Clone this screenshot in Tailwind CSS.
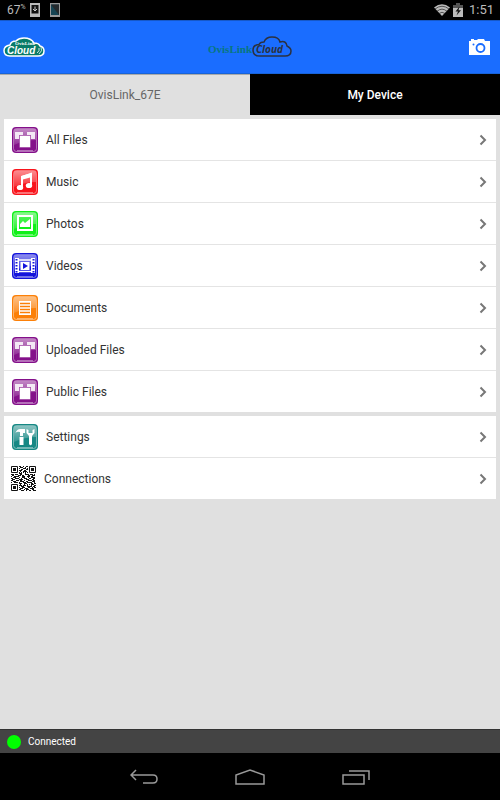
<!DOCTYPE html>
<html lang="en">

<head>
    <meta charset="UTF-8">
    <meta name="viewport" content="width=device-width, initial-scale=1.0">
    <title>OvisLink Cloud</title>
    <script src="https://cdn.jsdelivr.net/npm/@tailwindcss/browser@4"></script>
</head>

<body class="min-h-screen flex flex-col bg-[#e0e0e0] font-['Roboto',sans-serif] text-[#333]">
    <!-- shared icon parts -->
    <svg class="absolute w-0 h-0" aria-hidden="true">
        <defs>
            <linearGradient id="gloss" x1="0" y1="0" x2="0" y2="1">
                <stop offset="0" stop-color="#fff" stop-opacity=".5" />
                <stop offset="1" stop-color="#fff" stop-opacity=".12" />
            </linearGradient>
            <symbol id="tile" viewBox="0 0 26 26">
                <rect width="26" height="26" rx="4" fill="currentColor" />
                <path d="M2 4Q2 2 4 2H22Q24 2 24 4V13Q13 13 2 18Z" fill="url(#gloss)" />
                <rect x="1.5" y="1.5" width="23" height="23" rx="3" fill="none" stroke="#fff" stroke-opacity=".4" />
                <path d="M5 23.5H21" stroke="#fff" stroke-opacity=".4" />
            </symbol>
            <symbol id="files" viewBox="0 0 26 26">
                <use href="#tile" />
                <path d="M3 5H11V8H7V12H3ZM15 5H23V12H19V8H15Z" fill="#fff" fill-opacity=".85" />
                <rect x="7.5" y="8.5" width="11" height="12" fill="#fff" stroke="currentColor" stroke-opacity=".4" />
            </symbol>
            <symbol id="chevron" viewBox="0 0 8 12">
                <path d="M1.5 1.5L6 6L1.5 10.5" fill="none" stroke="#777" stroke-width="2" />
            </symbol>
        </defs>
    </svg>

    <div class="h-5 bg-black flex items-center justify-between pl-[7px] pr-1.5 text-[#bbb]">
        <div class="flex items-center">
            <span class="w-[22px] flex items-start text-[12px] leading-[14px]">67<span class="text-[7px] leading-[9px]">%</span></span>
            <svg class="w-2.5 h-3.5 ml-px" viewBox="0 0 10 14">
                <path d="M0 0H10V14H0Z" fill="#bbb" />
                <path d="M1.5 2H8.5V10.5H1.5Z" fill="#111" />
                <path d="M5 3.500V8M3 6L5 8L7 6" fill="none" stroke="#ccc" />
            </svg>
            <svg class="w-2.5 h-3.5 ml-2.5" viewBox="0 0 10 14">
                <path d="M0 0H10V14H0Z" fill="#999" />
                <path d="M1 1.5H9V12H1Z" fill="#164453" />
                <path d="M1 1.5H9V12Z" fill="#24292c" />
            </svg>
        </div>
        <div class="flex items-center">
            <svg class="w-4 h-3" viewBox="0 0 16 12">
                <path d="M0 3.5Q8-3 16 3.5L8 12Z" fill="#bbb" />
                <path d="M1 5Q8-.5 15 5M3 7.3Q8 3 13 7.3M5 9.5Q8 7 11 9.5" fill="none" stroke="#222" stroke-width=".7" />
            </svg>
            <svg class="w-2.5 h-3.5 ml-[3px]" viewBox="0 0 10 14">
                <path d="M3 0H7V2H10V5H0V2H3Z" fill="#555" />
                <path d="M0 5H10V14H0Z" fill="#bbb" />
                <path d="M6.5 3.5L2.5 8.5H5L3.5 12.5L8 7.3H5.5Z" fill="#111" />
            </svg>
            <span class="ml-1.5 text-[13px] leading-5">1:51</span>
        </div>
    </div>

    <header class="h-[54px] bg-[#1a6dff] border-t border-t-[#1658c8] border-b border-b-[#1763d8] grid grid-cols-[1fr_auto_1fr] items-center">
        <svg class="w-[42px] h-5 ml-[3px]" viewBox="0 0 42 20" role="img" aria-label="OvisLink Cloud">
            <path d="M7 19Q1 19 1 13.500Q1 9 7 8Q8 4 13 4Q16 1 21 1Q28 1 31 6Q36 6 37 9Q41 10 41 14Q41 19 35 19Z"
                fill="#087b68" stroke="#fff" stroke-width="1.5" />
            <text x="12" y="8" font-size="5" font-family="Liberation Serif, serif" font-weight="bold" fill="#fff">OvisLink</text>
            <text x="4" y="17" font-size="10" font-family="Liberation Sans, sans-serif" font-weight="bold" font-style="italic" fill="#fff">Cloud</text>
            <path d="M34 16Q37 14 36 11M36 17Q40 14 38 10" fill="none" stroke="#fff" stroke-width=".8" />
        </svg>
        <div class="flex items-center">
            <span class="font-['Liberation_Serif',serif] font-bold text-[11px] leading-3 pt-1 text-[#08777f]">OvisLink</span>
            <svg class="w-10 h-[22px]" viewBox="0 0 40 22" role="img" aria-label="Cloud">
                <path d="M8 20Q1 20 1 14Q1 9 7 8.5Q8 6 12 6Q14 1 20 1Q27 1 28 6Q34 4 35 10Q39 12 39 15Q39 20 33 20Z"
                    fill="none" stroke="#2b3140" stroke-width="1.5" />
                <text x="4" y="17" font-size="10" font-family="Open Sans, sans-serif" font-weight="bold" font-style="italic" fill="#2b3140">Cloud</text>
            </svg>
        </div>
        <button type="button" aria-label="Camera" class="justify-self-end mr-2.5">
            <svg class="w-[21px] h-4" viewBox="0 0 21 16">
                <path d="M2 0H5V1H8L9 0H15L16 2H21V16H0V2H2Z" fill="#fff" />
                <circle cx="11.5" cy="9" r="4" fill="#fff" stroke="#1a6dff" stroke-width="1.8" />
                <circle cx="4.5" cy="5.5" r="1" fill="#1a6dff" />
            </svg>
        </button>
    </header>

    <nav class="h-[41px] grid grid-cols-2 text-xs">
        <button type="button" class="border-t border-t-[#aaa] text-[#666]">OvisLink_67E</button>
        <button type="button" class="bg-black text-white font-medium">My Device</button>
    </nav>

    <main class="flex-1 p-1 flex flex-col gap-1 text-xs">
        <div class="bg-white divide-y divide-[#e4e4e4]">
            <a href="#all" class="flex items-center gap-2 pl-2 pr-[9px] h-[42px]">
                <svg class="size-[26px] text-[#84108a]"><use href="#files" /></svg>
                <span class="flex-1">All Files</span>
                <svg class="w-2 h-3"><use href="#chevron" /></svg>
            </a>
            <a href="#music" class="flex items-center gap-2 pl-2 pr-[9px] h-[42px]">
                <svg class="size-[26px] text-[#f8141c]" viewBox="0 0 26 26">
                    <use href="#tile" />
                    <path d="M10 18V8L19 5V16" fill="none" stroke="#fff" stroke-width="2" />
                    <path d="M9 7L20 4V8L9 11Z" fill="#fff" />
                    <ellipse cx="8" cy="18.5" rx="3.2" ry="2.6" fill="#fff" />
                    <ellipse cx="17" cy="16.5" rx="3.2" ry="2.6" fill="#fff" />
                </svg>
                <span class="flex-1">Music</span>
                <svg class="w-2 h-3"><use href="#chevron" /></svg>
            </a>
            <a href="#photos" class="flex items-center gap-2 pl-2 pr-[9px] h-[42px]">
                <svg class="size-[26px] text-[#10f018]" viewBox="0 0 26 26">
                    <use href="#tile" />
                    <path d="M6 5H20V19H6Z" fill="currentColor" fill-opacity=".4" stroke="#fff" stroke-width="2" />
                    <path d="M8 16V13L11 10L13 12L18 8V16Z" fill="#fff" />
                </svg>
                <span class="flex-1">Photos</span>
                <svg class="w-2 h-3"><use href="#chevron" /></svg>
            </a>
            <a href="#videos" class="flex items-center gap-2 pl-2 pr-[9px] h-[42px]">
                <svg class="size-[26px] text-[#1414dc]" viewBox="0 0 26 26">
                    <use href="#tile" />
                    <path d="M5 5V20M21 5V20" stroke="#fff" stroke-width="4" />
                    <path d="M4.5 6V20M21.5 6V20" stroke="#1414dc" stroke-width="2" stroke-dasharray="1.5 1.5" />
                    <path d="M7 7H19M7 18.5H19" stroke="#fff" stroke-width="1.5" />
                    <path d="M8.5 9H17.5V17H8.5Z" fill="#fff" />
                    <path d="M11 10L16 13L11 16Z" fill="#1414dc" />
                </svg>
                <span class="flex-1">Videos</span>
                <svg class="w-2 h-3"><use href="#chevron" /></svg>
            </a>
            <a href="#documents" class="flex items-center gap-2 pl-2 pr-[9px] h-[42px]">
                <svg class="size-[26px] text-[#fc8008]" viewBox="0 0 26 26">
                    <use href="#tile" />
                    <path d="M7 6H19V20H7Z" fill="#fff" />
                    <path d="M8 8.5H18M8 11.5H18M8 14.5H18M8 17.5H18" stroke="#fc8008" stroke-width="1.5" />
                </svg>
                <span class="flex-1">Documents</span>
                <svg class="w-2 h-3"><use href="#chevron" /></svg>
            </a>
            <a href="#uploaded" class="flex items-center gap-2 pl-2 pr-[9px] h-[42px]">
                <svg class="size-[26px] text-[#84108a]"><use href="#files" /></svg>
                <span class="flex-1">Uploaded Files</span>
                <svg class="w-2 h-3"><use href="#chevron" /></svg>
            </a>
            <a href="#public" class="flex items-center gap-2 pl-2 pr-[9px] h-[41px]">
                <svg class="size-[26px] text-[#84108a]"><use href="#files" /></svg>
                <span class="flex-1">Public Files</span>
                <svg class="w-2 h-3"><use href="#chevron" /></svg>
            </a>
        </div>

        <div class="bg-white divide-y divide-[#e4e4e4]">
            <a href="#settings" class="flex items-center gap-2 pl-2 pr-[9px] h-[42px]">
                <svg class="size-[26px] text-[#168884]" viewBox="0 0 26 26">
                    <use href="#tile" />
                    <path d="M3.5 9Q5 4.5 9 5H13V9H11V12H8V8Q5 7 3.500 9Z" fill="#fff" />
                    <path d="M7.5 13H11.5V21H7.5Z" fill="#fff" />
                    <path d="M14.5 5V9L17 12V20Q18.5 22.5 20 20V12L22.5 9V5L20.5 6V9H16.5V6Z" fill="#fff" />
                </svg>
                <span class="flex-1">Settings</span>
                <svg class="w-2 h-3"><use href="#chevron" /></svg>
            </a>
            <a href="#connections" class="flex items-center gap-2 pl-[7px] pr-[9px] h-[41px]">
                <svg class="size-[25px]" viewBox="0 0 25 25" fill="none" stroke="#111">
                    <path d="M.5 .5H6.5V6.5H.5ZM18.5 .5H24.5V6.5H18.5ZM.5 18.5H6.5V24.5H.5Z" />
                    <path d="M2 3.5H5M20 3.5H23M2 21.5H5" stroke-width="3" />
                    <path d="M8 .5h2m2 0h1m2 0h2M9 1.5h3m2 0h1M8 2.5h1m3 0h3m1 0h1M10 3.5h2m3 0h2M8 4.5h3m2 0h2M9 5.5h1m2 0h4M8 6.5h1m1 0h1m1 0h1m1 0h1m1 0h1M8 7.5h3m3 0h1" />
                    <path d="M0 8.5h3m1 0h3m2 0h2m3 0h4m1 0h3m1 0h1M1 9.5h2m4 0h3m1 0h2m4 0h2m2 0h3M0 10.5h1m2 0h5m3 0h3m2 0h3m1 0h2M2 11.5h3m3 0h1m2 0h3m3 0h1m2 0h4M0 12.5h2m2 0h4m2 0h1m2 0h3m2 0h2m2 0h2M1 13.5h3m4 0h4m3 0h3m3 0h2M0 14.5h2m3 0h3m1 0h2m2 0h1m3 0h4m1 0h2M2 15.5h3m4 0h4m2 0h2m4 0h3M0 16.5h1m2 0h4m1 0h1m3 0h3m1 0h5m2 0h1" />
                    <path d="M8 17.5h3m2 0h3m4 0h2m1 0h2M9 18.5h1m3 0h1m2 0h1m1 0h1m1 0h3M8 19.5h3m1 0h3m1 0h1m3 0h1m2 0h2M10 20.5h3m3 0h5m1 0h2M8 21.5h1m2 0h3m3 0h2m2 0h1m1 0h2M9 22.5h3m2 0h3m2 0h4M8 23.5h2m3 0h1m1 0h3m3 0h2M10 24.5h3m2 0h1m2 0h2m2 0h3" />
                </svg>
                <span class="flex-1">Connections</span>
                <svg class="w-2 h-3"><use href="#chevron" /></svg>
            </a>
        </div>
    </main>

    <footer>
        <div class="h-6 bg-[#444] border-t border-t-[#333] flex items-center gap-[7px] pl-[7px] text-[10px] text-white">
            <span class="size-3.5 rounded-full bg-[#0f0]"></span>
            Connected
        </div>
        <div class="h-[47px] bg-black flex items-center justify-center gap-[77px]">
            <button type="button" aria-label="Back">
                <svg class="w-7 h-4" viewBox="0 0 28 16" fill="none" stroke="#999" stroke-width="1.5">
                    <path d="M6 1L1 6L6 11M1 6H23Q27 6 27 10Q27 14 23 14H13" />
                </svg>
            </button>
            <button type="button" aria-label="Home">
                <svg class="w-[30px] h-4" viewBox="0 0 30 16" fill="none" stroke="#999" stroke-width="1.5">
                    <path d="M1 15V6L15 1L29 6V15Z" />
                </svg>
            </button>
            <button type="button" aria-label="Recent apps">
                <svg class="w-7 h-4" viewBox="0 0 28 16" fill="none" stroke="#999" stroke-width="1.5">
                    <path d="M1 6H22V15H1ZM7 2H27V11" />
                </svg>
            </button>
        </div>
    </footer>
</body>

</html>
